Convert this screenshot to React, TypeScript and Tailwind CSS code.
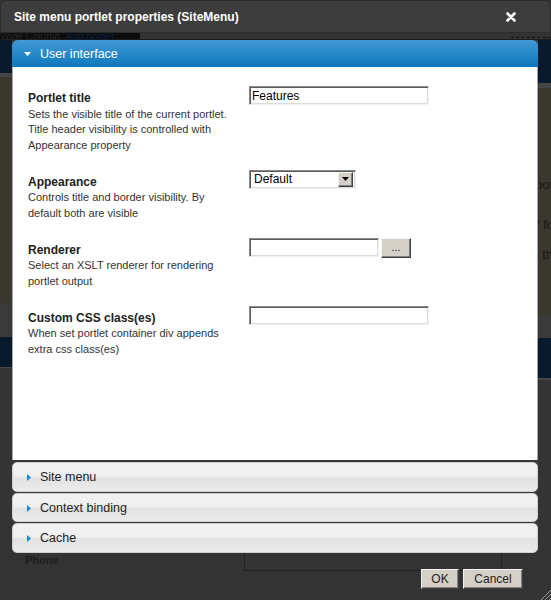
const fields = [
  {
    label: "Portlet title",
    desc: "Sets the visible title of the current portlet. Title header visibility is controlled with Appearance property",
    control: "title",
  },
  {
    label: "Appearance",
    desc: "Controls title and border visibility. By default both are visible",
    control: "select",
  },
  {
    label: "Renderer",
    desc: "Select an XSLT renderer for rendering portlet output",
    control: "renderer",
  },
  {
    label: "Custom CSS class(es)",
    desc: "When set portlet container div appends extra css class(es)",
    control: "css",
  },
];

const inset =
  "border border-[#8a8a8a] border-b-[#f2f2f2] border-r-[#f2f2f2] bg-white shadow-[inset_1px_1px_0_#5a5a5a,inset_-1px_-1px_0_#dcdcdc]";
const outset =
  "border border-[#f4f4f4] border-b-[#404040] border-r-[#404040] bg-[#d4d0c8] shadow-[inset_-1px_-1px_0_#808080]";

function Control({ kind }: { kind: string }) {
  if (kind === "select") {
    return (
      <div className={`${inset} flex h-[19px] w-[107px] items-center justify-between pl-[4px] pr-[2px]`}>
        <span className="text-[12px] leading-none text-black">Default</span>
        <div className={`${outset} flex h-[15px] w-[15px] items-center justify-center`}>
          <svg width="7" height="4" viewBox="0 0 7 4">
            <path d="M0 0h7L3.5 4z" fill="#000" />
          </svg>
        </div>
      </div>
    );
  }
  if (kind === "renderer") {
    return (
      <div className="flex items-start gap-[2px]">
        <div className={`${inset} h-[19px] w-[130px]`} />
        <div
          className={`${outset} flex h-[20px] w-[30px] items-center justify-center text-[11px] leading-none text-[#222]`}
        >
          ...
        </div>
      </div>
    );
  }
  return (
    <div className={`${inset} flex h-[19px] w-[180px] items-center px-[2px] text-[12px] leading-none text-black`}>
      {kind === "title" ? "Features" : ""}
    </div>
  );
}

function Collapsed({ title, h }: { title: string; h: string }) {
  return (
    <div
      className={`${h} flex items-center rounded-[5px] border border-[#cfcfcf] bg-[linear-gradient(#f2f2f2_0%,#efefef_47%,#e2e2e2_53%,#ebebeb_100%)] pl-[14px] pt-[1px]`}
    >
      <svg width="4" height="7" viewBox="0 0 4 7" className="mr-[9px]">
        <path d="M0 0l4 3.5L0 7z" fill="#1a8ad4" />
      </svg>
      <span className="text-[12.5px] leading-none text-[#222]">{title}</span>
    </div>
  );
}

export default function App() {
  return (
    <div className="relative h-[600px] w-[551px] overflow-hidden bg-[#333] font-['Liberation_Sans',Arial,sans-serif]">
      {/* dialog title bar */}
      <div className="flex h-[33px] items-center justify-between rounded-t-[6px] border border-[#2c2c2c] bg-[#3d3d3d] pl-[13px] pr-[34px]">
        <span className="text-[12px] font-bold text-white">Site menu portlet properties (SiteMenu)</span>
        <svg width="10" height="10" viewBox="0 0 10 10">
          <path d="M1.5 1.5l7 7M8.5 1.5l-7 7" stroke="#fff" strokeWidth="2.6" strokeLinecap="round" />
        </svg>
      </div>

      {/* page strip behind dialog */}
      <div className="flex h-[7px] items-start border-b border-[#1a1a1a]">
        <div className="flex h-full w-[140px] items-start gap-[6px] bg-[#0c0c0c] text-[10px] leading-[8px]">
          <span className="text-[#262626]">Wide Column</span>
          <span className="text-[#0a2040]">Add portlet</span>
        </div>
        <div className="flex-1" />
        <div className="mt-[4px] w-[40px] border-t border-dashed border-[#111]" />
      </div>

      <div className="relative flex h-[513px]">
        {/* left page strip */}
        <div className="flex w-[12px] flex-col">
          <div className="h-[33px] bg-[#081a2b]" />
          <div className="h-[4px] bg-[#454545]" />
          <div className="h-[226px] bg-[#3a382e]" />
          <div className="h-[34px] bg-[#3a3a3a]" />
          <div className="h-[30px] bg-[#081a2b]" />
          <div className="h-[1px] bg-[#474747]" />
          <div className="flex-1 bg-[#343434]" />
        </div>

        {/* accordion */}
        <div className="flex w-[526px] flex-col bg-[#3a3a3a]">
          <div className="flex h-[27px] items-center rounded-t-[6px] bg-[linear-gradient(#419ad5,#0e78bd)] pl-[12px] pt-[1px]">
            <svg width="7" height="4" viewBox="0 0 7 4" className="mr-[9px]">
              <path d="M0 0h7L3.5 4z" fill="#fff" />
            </svg>
            <span className="text-[12.5px] leading-none text-white">User interface</span>
          </div>
          <div className="flex h-[393px] flex-col gap-[16.5px] border-x border-[#a8a8a8] bg-white pl-[15px] pt-[19px]">
            {fields.map((f) => (
              <div key={f.label} className="flex items-start">
                <div className="w-[221px] pt-[5px]">
                  <div className="w-[204px] text-[#333]">
                    <div className="text-[12px] font-bold leading-[15.5px] text-[#222]">{f.label}</div>
                    <div className="text-[11px] leading-[15.5px]">{f.desc}</div>
                  </div>
                </div>
                <Control kind={f.control} />
              </div>
            ))}
          </div>
          <div className="mt-[2px] flex flex-col gap-[1px]">
            <Collapsed title="Site menu" h="h-[30px]" />
            <Collapsed title="Context binding" h="h-[29px]" />
            <Collapsed title="Cache" h="h-[30px]" />
          </div>
        </div>

        {/* right page strip */}
        <div className="flex w-[13px] flex-col overflow-hidden">
          <div className="h-[43px] bg-[#081a2b]" />
          <div className="h-[5px] bg-[#454545]" />
          <div className="flex h-[227px] flex-col bg-[#3a382e] pt-[90px] text-[13px] leading-none text-[#161616]">
            <div className="-ml-[3px] whitespace-nowrap">por</div>
            <div className="-ml-[2px] mt-[27px] whitespace-nowrap">/ fo</div>
            <div className="-ml-[3px] mt-[17px] whitespace-nowrap">: th</div>
          </div>
          <div className="h-[23px] bg-[#3a3a3a]" />
          <div className="h-[40px] bg-[#081a2b]" />
          <div className="h-[2px] bg-[#474747]" />
          <div className="flex-1 bg-[#343434]" />
        </div>
      </div>

      {/* bottom: page content + dialog buttons */}
      <div className="relative flex h-[47px] items-start">
        <div className="w-[244px] pl-[25px] text-[11px] font-bold leading-[14px] text-[#1e1e1e]">Phone</div>
        <div className="h-[18px] w-[258px] border-x border-b border-[#222]" />
        <div className="absolute right-[28px] top-[16px] flex gap-[4px]">
          <div className={`${outset} flex h-[20px] w-[38px] items-center justify-center text-[12px] text-[#222]`}>OK</div>
          <div className={`${outset} flex h-[20px] w-[60px] items-center justify-center text-[12px] text-[#222]`}>
            Cancel
          </div>
        </div>
        <svg width="11" height="11" viewBox="0 0 11 11" className="absolute bottom-0 right-0">
          <path d="M11 1L1 11M11 5L5 11M11 9L9 11" stroke="#9a9a9a" strokeWidth="1" />
        </svg>
      </div>
    </div>
  );
}
